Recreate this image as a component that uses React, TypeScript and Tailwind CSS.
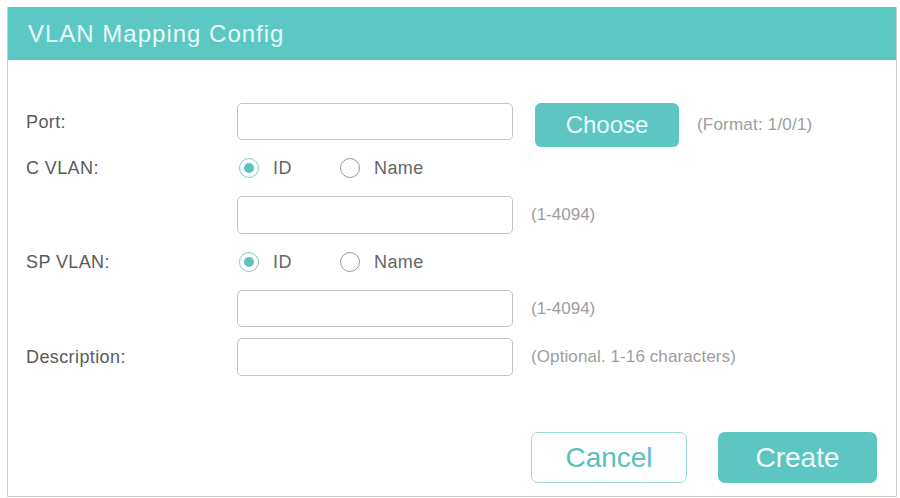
import React from "react";

const font = { fontFamily: '"Liberation Sans", Arial, sans-serif' };

function Radio({ checked, label }: { checked?: boolean; label: string }) {
  return (
    <div className="flex items-center">
      <span
        className={
          checked
            ? "flex h-[20px] w-[20px] items-center justify-center rounded-full border-[1.5px] border-[#7fcfcb] bg-white"
            : "flex h-[20px] w-[20px] items-center justify-center rounded-full border-[1.5px] border-[#9a9a9a] bg-white"
        }
      >
        {checked && <span className="h-[10px] w-[10px] rounded-full bg-[#5cc4bf]" />}
      </span>
      <span className="ml-[14px] text-[18px] tracking-[0.4px] text-[#666]">{label}</span>
    </div>
  );
}

function TextInput({ h = "h-[37px]" }: { h?: string }) {
  return <div className={`${h} w-[276px] rounded-[5px] border border-[#c4c4c4] bg-white`} />;
}

function Row({ label, children, className }: { label?: string; children: React.ReactNode; className: string }) {
  return (
    <div className={`flex items-start ${className}`}>
      <div className="w-[211px] shrink-0 text-[18px] leading-[39px] tracking-[0.4px] text-[#5a5a5a]">{label}</div>
      <div className="flex items-start">{children}</div>
    </div>
  );
}

function RadioRow({ label, className }: { label: string; className: string }) {
  return (
    <div className={`flex h-[26px] items-center ${className}`}>
      <div className="w-[211px] shrink-0 text-[18px] tracking-[0.4px] text-[#5a5a5a]">{label}</div>
      <div className="flex items-center pl-[2px]">
        <div className="w-[101px]">
          <Radio checked label="ID" />
        </div>
        <Radio label="Name" />
      </div>
    </div>
  );
}

export default function App() {
  return (
    <div className="h-[498px] w-[900px] bg-white pl-[7px] pt-[7px]" style={font}>
      <div className="flex h-[490px] w-[890px] flex-col border-x border-b border-[#cfcfcf]">
        <div className="flex h-[53px] items-center bg-[#5cc8c3] pl-[20px]">
          <span className="text-[24px] tracking-[1px] text-[#e9fbfa]">VLAN Mapping Config</span>
        </div>

        <div className="flex flex-1 flex-col pl-[18px] pt-[43px]">
          <Row label="Port:" className="h-[44px]">
            <TextInput />
            <button
              type="button"
              className="ml-[22px] h-[44px] w-[144px] rounded-[6px] bg-[#5dc6c1] text-[24px] text-[#eafbfa]"
            >
              Choose
            </button>
            <span className="ml-[18px] text-[17px] leading-[44px] tracking-[0.2px] text-[#9d9d9d]">(Format: 1/0/1)</span>
          </Row>

          <RadioRow label="C VLAN:" className="mt-[8px]" />

          <Row className="mt-[15px] h-[38px]">
            <TextInput h="h-[38px]" />
            <span className="ml-[18px] text-[17px] leading-[38px] text-[#9d9d9d]">(1-4094)</span>
          </Row>

          <RadioRow label="SP VLAN:" className="mt-[15px]" />

          <Row className="mt-[15px] h-[37px]">
            <TextInput />
            <span className="ml-[18px] text-[17px] leading-[37px] text-[#9d9d9d]">(1-4094)</span>
          </Row>

          <Row label="Description:" className="mt-[11px] h-[38px]">
            <TextInput h="h-[38px]" />
            <span className="ml-[18px] text-[17px] leading-[38px] tracking-[0.1px] text-[#9d9d9d]">
              (Optional. 1-16 characters)
            </span>
          </Row>

          <div className="mt-[56px] flex justify-end gap-[31px] pr-[19px]">
            <button
              type="button"
              className="h-[51px] w-[156px] rounded-[7px] border-[1.5px] border-[#9ad9d5] bg-white text-[28px] text-[#5cbfba]"
            >
              Cancel
            </button>
            <button
              type="button"
              className="h-[51px] w-[159px] rounded-[7px] bg-[#5dc6c1] text-[28px] text-[#effcfb]"
            >
              Create
            </button>
          </div>
        </div>
      </div>
    </div>
  );
}
